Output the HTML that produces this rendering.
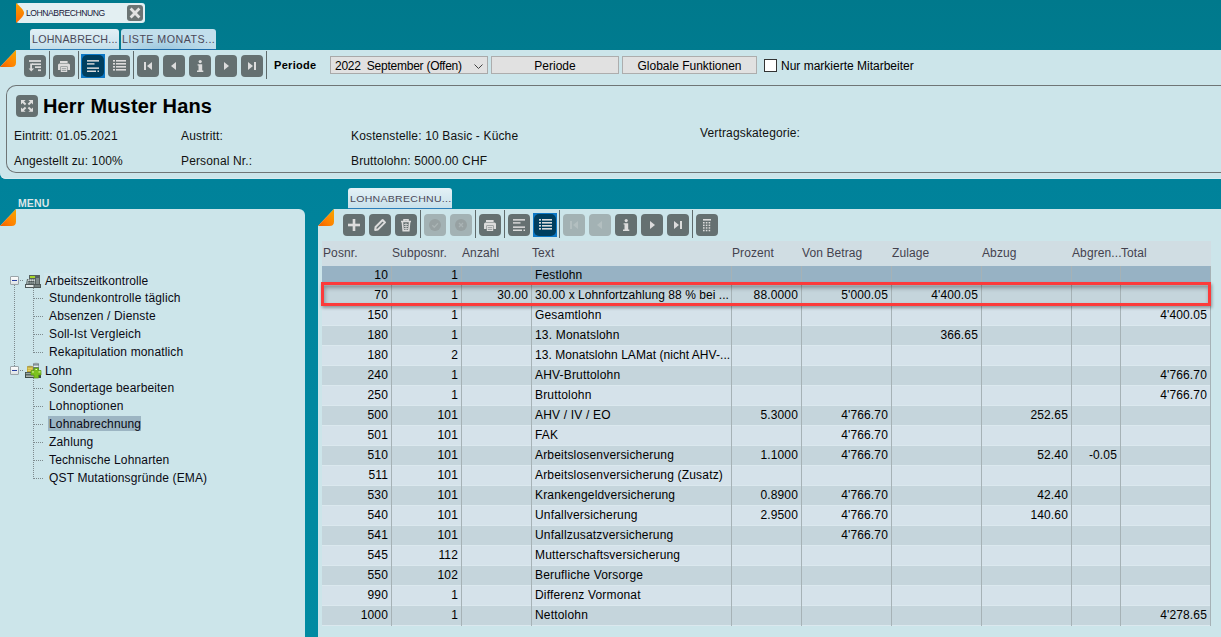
<!DOCTYPE html>
<html><head><meta charset="utf-8">
<style>
*{box-sizing:border-box;margin:0;padding:0}
html,body{width:1221px;height:637px;overflow:hidden}
body{position:relative;background:linear-gradient(#00798c 0px,#007b8f 50px,#00829a 180px,#0087a0 400px,#008ba2 637px);font-family:"Liberation Sans",sans-serif;font-size:12px;color:#111}
.a{position:absolute}
.pl{background:#cce5ea;clip-path:polygon(16px 0,100% 0,100% 100%,0 100%,0 17px)}
.btn{position:absolute;width:22px;height:22px;border-radius:4px;background:#657071}
.btn svg{position:absolute;left:0;top:0}
.btn.dis{background:#a3b2b4}
.btn.act{background:#003f5f;border-radius:5px}
.actb{position:absolute;width:24px;height:24px;background:#0c78c6}
.sep{position:absolute;width:1px;background:#5f6a6b}
.t{position:absolute;white-space:nowrap}
.corner{position:absolute;width:17px;height:17px}
</style></head><body>

<!-- top doc tab -->
<div class="a" style="left:16px;top:3px;width:129px;height:20px;background:#e3eff2;border-radius:3px"></div>
<svg class="a" style="left:16px;top:3px" width="9" height="20"><defs><linearGradient id="og" x1="0" y1="0" x2="0" y2="1"><stop offset="0" stop-color="#f7a000"/><stop offset="1" stop-color="#ff6a00"/></linearGradient></defs><path d="M0 0 C4 3.5 8 7 8 10 C8 13 4 16.5 0 20 Z" fill="url(#og)"/></svg>
<div class="t" style="left:26px;top:8px;font-size:8.6px;letter-spacing:-0.45px;color:#18183a">LOHNABRECHNUNG</div>
<div class="a" style="left:127px;top:5px;width:16px;height:16px;background:#6c7474;border-radius:3px"></div>
<svg class="a" style="left:127px;top:5px" width="16" height="16"><path d="M4.6 4.6 L11.4 11.4 M11.4 4.6 L4.6 11.4" stroke="#e2e2e2" stroke-width="2.8" stroke-linecap="square"/></svg>

<!-- second tabs -->
<div class="a" style="left:30px;top:29px;width:89px;height:21px;background:linear-gradient(#e2f0f5,#cfe5ee 70%,#c3dde8);border-radius:3px 3px 0 0;border-bottom:1px solid #2a7db8"></div>
<div class="t" style="left:32px;top:33px;font-size:10.7px;color:#4b4858;letter-spacing:0.2px">LOHNABRECH...</div>
<div class="a" style="left:121px;top:29px;width:95px;height:21px;background:radial-gradient(ellipse 60% 70% at 45% 100%,#9ec8de,#b9d9e8 70%,#c2dfec);border-radius:3px 3px 0 0;border-bottom:1px solid #1a6aaa"></div>
<div class="t" style="left:122px;top:33px;font-size:10.7px;color:#4b4858;letter-spacing:0.45px">LISTE MONATS...</div>

<!-- top panel -->
<div class="a pl" style="left:0;top:50px;width:1221px;height:129px;border-radius:0 0 0 6px;box-shadow:inset 0 -1px 0 #d8ebf0"></div>
<svg class="corner" style="left:0;top:50px"><defs><linearGradient id="cg1" x1="1" y1="0" x2="0" y2="1"><stop offset="0" stop-color="#f6a800"/><stop offset="0.6" stop-color="#ff8000"/><stop offset="1" stop-color="#f06000"/></linearGradient></defs><path d="M16 0 L16 12.5 Q16 17 11.5 17 L0 17 Z" fill="url(#cg1)"/></svg>

<!-- toolbar 1 -->
<div class="btn " style="left:24px;top:55px"><svg width="22" height="22"><g fill="#dcdcdc"><rect x="5" y="5.1" width="12" height="1.8"/><rect x="8" y="8.4" width="9" height="1.6"/><rect x="11" y="11.3" width="6" height="1.7"/><rect x="14" y="14.4" width="3" height="1.7"/><path d="M6.2 8.4 H9 V10 H8 V13.4 H10.2 L7.2 16.6 L4.6 13.4 H6.2 Z"/></g></svg></div>
<div class="sep" style="left:49px;top:51px;height:28px"></div>
<div class="btn " style="left:53px;top:55px"><svg width="22" height="22"><g fill="#dcdcdc"><rect x="7" y="6" width="7.6" height="2"/><path d="M5 10 Q5 8.4 6.6 8.4 H15.4 Q17 8.4 17 10 V15 H14.6 V11.4 H7.4 V15 H5 Z"/><rect x="7.8" y="12" width="6.4" height="5"/></g><g fill="#8a9394"><rect x="8.8" y="13.3" width="4.4" height="0.8"/><rect x="8.8" y="15.2" width="4.4" height="0.8"/></g></svg></div>
<div class="sep" style="left:78px;top:51px;height:28px"></div>
<div class="actb" style="left:81px;top:54px"></div><div class="btn act" style="left:82px;top:55px"><svg width="22" height="22"><g fill="#dcdcdc"><rect x="5" y="5.1" width="12" height="1.5"/><rect x="5" y="8.2" width="7.5" height="1.4"/><rect x="5" y="12.4" width="12" height="1.5"/><rect x="5" y="15.5" width="9" height="1.5"/><rect x="15.5" y="15.5" width="1.5" height="1.5"/></g></svg></div>
<div class="btn " style="left:108px;top:55px"><svg width="22" height="22"><g fill="#dcdcdc"><rect x="5" y="5" width="2" height="1.6"/><rect x="8" y="5" width="10" height="1.6"/><rect x="5" y="8" width="2" height="1.6"/><rect x="8" y="8" width="10" height="1.6"/><rect x="5" y="11" width="2" height="1.6"/><rect x="8" y="11" width="10" height="1.6"/><rect x="5" y="14" width="2" height="1.6"/><rect x="8" y="14" width="10" height="1.6"/></g></svg></div>
<div class="sep" style="left:133px;top:51px;height:28px"></div>
<div class="btn " style="left:137px;top:55px"><svg width="22" height="22"><g fill="#dcdcdc"><rect x="7" y="7" width="2" height="8"/><path d="M15 7 v8 l-5 -4z"/></g></svg></div>
<div class="btn " style="left:163px;top:55px"><svg width="22" height="22"><g fill="#dcdcdc"><path d="M13 7 v8 l-5 -4z"/></g></svg></div>
<div class="btn " style="left:189px;top:55px"><svg width="22" height="22"><g fill="#dcdcdc"><circle cx="11.2" cy="6.6" r="1.6"/><path d="M8.6 9.2 H13.2 V15.4 H14.3 V17 H8 V15.4 H9.5 V10.6 H8.6 Z"/></g></svg></div>
<div class="btn " style="left:215px;top:55px"><svg width="22" height="22"><g fill="#dcdcdc"><path d="M9 7 v8 l5 -4z"/></g></svg></div>
<div class="btn " style="left:241px;top:55px"><svg width="22" height="22"><g fill="#dcdcdc"><path d="M7 7 v8 l5 -4z"/><rect x="13" y="7" width="2" height="8"/></g></svg></div>
<div class="sep" style="left:266px;top:51px;height:28px"></div>
<div class="t" style="left:274px;top:59px;font-size:11px;font-weight:700;color:#000;letter-spacing:0.3px">Periode</div>
<div class="a" style="left:330px;top:56px;width:158px;height:18px;background:#e1e1e1;border:1px solid #a9a9a9"></div>
<div class="t" style="left:335px;top:59px;font-size:12px;color:#000;letter-spacing:-0.25px">2022&nbsp; September (Offen)</div>
<svg class="a" style="left:473px;top:62px" width="12" height="8"><path d="M1.5 2.5 L5.5 6.5 L9.5 2.5" stroke="#404040" stroke-width="1" fill="none"/></svg>
<div class="a" style="left:491px;top:56px;width:128px;height:18px;background:#e1e1e1;border:1px solid #adadad"></div>
<div class="t" style="left:491px;top:59px;width:128px;text-align:center;font-size:12px;color:#000">Periode</div>
<div class="a" style="left:622px;top:56px;width:135px;height:18px;background:#e1e1e1;border:1px solid #adadad"></div>
<div class="t" style="left:622px;top:59px;width:135px;text-align:center;font-size:12px;color:#000">Globale Funktionen</div>
<div class="a" style="left:764px;top:59px;width:13px;height:13px;background:#fff;border:1px solid #333"></div>
<div class="t" style="left:781px;top:59px;font-size:12px;color:#000">Nur markierte Mitarbeiter</div>

<!-- header card -->
<div class="a" style="left:6px;top:85px;width:1230px;height:88px;border:1px solid #6f7576;border-right:none;border-radius:10px 0 0 10px"></div>
<div class="btn" style="left:16px;top:95px"><svg width="22" height="22"><g fill="#dedede"><path d="M5 5 H9.6 L5 9.4 Z M17 5 H12.4 L17 9.4 Z M5 16.8 H9.6 L5 12.4 Z M17 16.8 H12.4 L17 12.4 Z"/></g><g stroke="#dedede" stroke-width="2"><path d="M6 6 L9.6 9.4 M16 6 L12.4 9.4 M6 15.8 L9.6 12.4 M16 15.8 L12.4 12.4"/></g></svg></div>
<div class="t" style="left:43px;top:95px;font-size:20px;font-weight:700;letter-spacing:0.15px;color:#000">Herr Muster Hans</div>
<div class="t" style="left:14px;top:129px;letter-spacing:0.15px">Eintritt: 01.05.2021</div>
<div class="t" style="left:181px;top:129px;letter-spacing:0.15px">Austritt:</div>
<div class="t" style="left:351px;top:129px;letter-spacing:0.15px">Kostenstelle: 10 Basic - Küche</div>
<div class="t" style="left:700px;top:126px;letter-spacing:0.15px">Vertragskategorie:</div>
<div class="t" style="left:14px;top:154px;letter-spacing:0.15px">Angestellt zu: 100%</div>
<div class="t" style="left:181px;top:154px;letter-spacing:0.15px">Personal Nr.:</div>
<div class="t" style="left:351px;top:154px;letter-spacing:0.15px">Bruttolohn: 5000.00 CHF</div>

<!-- MENU -->
<div class="t" style="left:18px;top:197px;font-size:10.5px;font-weight:700;color:#dce6e8;letter-spacing:0.1px">MENU</div>
<div class="a pl" style="left:0;top:209px;width:305px;height:428px;border-radius:0 6px 0 0"></div>
<svg class="corner" style="left:0;top:209px"><defs><linearGradient id="cg2" x1="1" y1="0" x2="0" y2="1"><stop offset="0" stop-color="#f6a800"/><stop offset="0.6" stop-color="#ff8000"/><stop offset="1" stop-color="#f06000"/></linearGradient></defs><path d="M16 0 L16 12.5 Q16 17 11.5 17 L0 17 Z" fill="url(#cg2)"/></svg>
<div class="a" style="left:14px;top:285px;width:1px;height:81px;background:repeating-linear-gradient(#7d8a8e 0 1px,transparent 1px 2px)"></div>
<div class="a" style="left:10px;top:276px;width:9px;height:9px;border:1px solid #9aa4a8;background:linear-gradient(#fdfdfd,#dde2e4);border-radius:1px"></div><div class="a" style="left:12px;top:280px;width:5px;height:1px;background:#2840a0"></div>
<div class="a" style="left:20px;top:280px;width:4px;height:1px;background:repeating-linear-gradient(90deg,#7d8a8e 0 1px,transparent 1px 2px)"></div>
<svg class="a" style="left:25px;top:274px" width="17" height="15"><rect x="4" y="1" width="11" height="4" fill="#56605f"/><rect x="5" y="2" width="7" height="2" fill="#a6d62a"/><rect x="10" y="1" width="5" height="10" fill="#56605f"/><rect x="11" y="4" width="3" height="6" fill="#7f8b8b"/><path d="M2 5 H10.5 V10.5 H1 Z" fill="#55605f"/><path d="M2.6 5.6 H10 V10 H1.8 Z" fill="#98a4a4"/><g fill="#f4f6f6"><rect x="3" y="5.6" width="1.2" height="1"/><rect x="5" y="5.6" width="1.2" height="1"/><rect x="7" y="5.6" width="1.2" height="1"/><rect x="9" y="5.6" width="1" height="1"/></g><g fill="#2f3838"><rect x="3.5" y="7" width="1.2" height="1"/><rect x="5.5" y="7" width="1.2" height="1"/><rect x="7.5" y="7" width="1.2" height="1"/><rect x="3.5" y="8.6" width="1.2" height="1"/><rect x="5.5" y="8.6" width="1.2" height="1"/><rect x="7.5" y="8.6" width="1.2" height="1"/></g><rect x="0" y="10" width="16" height="4" fill="#4f5959"/><rect x="1" y="11" width="7.5" height="2" fill="#e4eaea"/><rect x="9.5" y="11" width="5.5" height="2" fill="#75807f"/></svg>
<div class="a" style="left:44px;top:273px;width:105px;height:14px;background:rgba(255,255,255,.1)"></div>
<div class="t" style="left:45px;top:274px;font-size:12px;letter-spacing:0.1px;color:#0a0a14">Arbeitszeitkontrolle</div>
<div class="a" style="left:33px;top:288px;width:1px;height:65px;background:repeating-linear-gradient(#7d8a8e 0 1px,transparent 1px 2px)"></div>
<div class="a" style="left:34px;top:298px;width:10px;height:1px;background:repeating-linear-gradient(90deg,#7d8a8e 0 1px,transparent 1px 2px)"></div>
<div class="t" style="left:49px;top:291px;font-size:12px;letter-spacing:0.15px;color:#0a0a14">Stundenkontrolle täglich</div>
<div class="a" style="left:34px;top:316px;width:10px;height:1px;background:repeating-linear-gradient(90deg,#7d8a8e 0 1px,transparent 1px 2px)"></div>
<div class="t" style="left:49px;top:309px;font-size:12px;letter-spacing:0.15px;color:#0a0a14">Absenzen / Dienste</div>
<div class="a" style="left:34px;top:334px;width:10px;height:1px;background:repeating-linear-gradient(90deg,#7d8a8e 0 1px,transparent 1px 2px)"></div>
<div class="t" style="left:49px;top:327px;font-size:12px;letter-spacing:0.15px;color:#0a0a14">Soll-Ist Vergleich</div>
<div class="a" style="left:34px;top:352px;width:10px;height:1px;background:repeating-linear-gradient(90deg,#7d8a8e 0 1px,transparent 1px 2px)"></div>
<div class="t" style="left:49px;top:345px;font-size:12px;letter-spacing:0.15px;color:#0a0a14">Rekapitulation monatlich</div>
<div class="a" style="left:10px;top:366px;width:9px;height:9px;border:1px solid #9aa4a8;background:linear-gradient(#fdfdfd,#dde2e4);border-radius:1px"></div><div class="a" style="left:12px;top:370px;width:5px;height:1px;background:#2840a0"></div>
<div class="a" style="left:20px;top:370px;width:4px;height:1px;background:repeating-linear-gradient(90deg,#7d8a8e 0 1px,transparent 1px 2px)"></div>
<svg class="a" style="left:25px;top:362px" width="17" height="17"><rect x="8" y="1.5" width="6" height="8" fill="#6a7a80"/><ellipse cx="11" cy="1.8" rx="3" ry="1" fill="#9aa4a8"/><rect x="8.5" y="3.5" width="5" height="1.5" fill="#e6eef2"/><rect x="2" y="4.5" width="6" height="6" fill="#b8a030"/><rect x="2.6" y="5.5" width="5" height="1.2" fill="#f2e070"/><rect x="2.6" y="7.6" width="5" height="1.2" fill="#f2e070"/><ellipse cx="5" cy="4.6" rx="3" ry="0.9" fill="#a89a50"/><rect x="0" y="10" width="16" height="6" fill="#3e4c46"/><rect x="0.8" y="10.8" width="8" height="1.5" fill="#9aa8a2"/><rect x="1" y="13.5" width="8" height="1.3" fill="#c4ccc8"/><path d="M9 6 H13.5 V8.5 H16 V13 H13.5 V16 H9 V13 H6 V8.5 H9 Z" fill="#7cc21e" stroke="#5a9a14" stroke-width="0.7"/><rect x="10.5" y="7" width="1.5" height="1" fill="#e8ffb0"/><rect x="7" y="9.5" width="2" height="0.9" fill="#e8ffb0"/><rect x="13.5" y="9.5" width="2" height="0.9" fill="#e8ffb0"/></svg>
<div class="t" style="left:45px;top:364px;font-size:12px;letter-spacing:0.1px;color:#0a0a14">Lohn</div>
<div class="a" style="left:33px;top:378px;width:1px;height:101px;background:repeating-linear-gradient(#7d8a8e 0 1px,transparent 1px 2px)"></div>
<div class="a" style="left:34px;top:388px;width:10px;height:1px;background:repeating-linear-gradient(90deg,#7d8a8e 0 1px,transparent 1px 2px)"></div>
<div class="t" style="left:49px;top:381px;font-size:12px;letter-spacing:0.15px;color:#0a0a14">Sondertage bearbeiten</div>
<div class="a" style="left:34px;top:406px;width:10px;height:1px;background:repeating-linear-gradient(90deg,#7d8a8e 0 1px,transparent 1px 2px)"></div>
<div class="t" style="left:49px;top:399px;font-size:12px;letter-spacing:0.15px;color:#0a0a14">Lohnoptionen</div>
<div class="a" style="left:34px;top:424px;width:10px;height:1px;background:repeating-linear-gradient(90deg,#7d8a8e 0 1px,transparent 1px 2px)"></div>
<div class="a" style="left:48px;top:416px;width:93px;height:15px;background:#9cb5c3"></div>
<div class="t" style="left:49px;top:417px;font-size:12px;letter-spacing:0.15px;color:#0a0a14">Lohnabrechnung</div>
<div class="a" style="left:34px;top:442px;width:10px;height:1px;background:repeating-linear-gradient(90deg,#7d8a8e 0 1px,transparent 1px 2px)"></div>
<div class="t" style="left:49px;top:435px;font-size:12px;letter-spacing:0.15px;color:#0a0a14">Zahlung</div>
<div class="a" style="left:34px;top:460px;width:10px;height:1px;background:repeating-linear-gradient(90deg,#7d8a8e 0 1px,transparent 1px 2px)"></div>
<div class="t" style="left:49px;top:453px;font-size:12px;letter-spacing:0.15px;color:#0a0a14">Technische Lohnarten</div>
<div class="a" style="left:34px;top:478px;width:10px;height:1px;background:repeating-linear-gradient(90deg,#7d8a8e 0 1px,transparent 1px 2px)"></div>
<div class="t" style="left:49px;top:471px;font-size:12px;letter-spacing:0.15px;color:#0a0a14">QST Mutationsgründe (EMA)</div>

<!-- grid panel -->
<div class="a" style="left:348px;top:188px;width:104px;height:21px;background:linear-gradient(#e4f1f6,#d3e7ef 60%,#c8e0ea);border-radius:3px 3px 0 0;border-bottom:1px solid #2a7db8"></div>
<div class="t" style="left:350px;top:193px;font-size:9.6px;color:#4b4858;letter-spacing:0.25px;transform:scaleX(1.1);transform-origin:0 0">LOHNABRECHNU...</div>
<div class="a pl" style="left:318px;top:209px;width:903px;height:428px"></div>
<svg class="corner" style="left:318px;top:209px"><defs><linearGradient id="cg3" x1="1" y1="0" x2="0" y2="1"><stop offset="0" stop-color="#f6a800"/><stop offset="0.6" stop-color="#ff8000"/><stop offset="1" stop-color="#f06000"/></linearGradient></defs><path d="M16 0 L16 12.5 Q16 17 11.5 17 L0 17 Z" fill="url(#cg3)"/></svg>
<div class="btn " style="left:343px;top:214px"><svg width="22" height="22"><g fill="#dcdcdc"><rect x="5" y="9.7" width="12" height="2.6"/><rect x="9.7" y="5" width="2.6" height="12"/></g></svg></div>
<div class="btn " style="left:369px;top:214px"><svg width="22" height="22"><g fill="none" stroke="#dcdcdc" stroke-width="2" stroke-linejoin="round"><path d="M6.2 16 L6.6 13 L13.6 6 L16 8.4 L9 15.4 Z"/></g></svg></div>
<div class="btn " style="left:395px;top:214px"><svg width="22" height="22"><g fill="none" stroke="#dcdcdc" stroke-width="1.6"><path d="M6 7.5 H16 M9 7 V5.8 H13 V7"/><path d="M7.4 8 L8.2 16.6 H13.8 L14.6 8"/><path d="M9 10.5 H13 M9 12.5 H13 M9 14.5 H13 M11 9 V16" stroke-width="0.8"/></g></svg></div>
<div class="sep" style="left:420px;top:210px;height:28px"></div>
<div class="btn dis" style="left:424px;top:214px"><svg width="22" height="22"><circle cx="11" cy="11" r="6" fill="#97a1a2"/><path d="M8.3 11.2 l2 2 l3.6 -3.8" stroke="#aab4b5" stroke-width="1.3" fill="none"/></svg></div>
<div class="btn dis" style="left:450px;top:214px"><svg width="22" height="22"><circle cx="11" cy="11" r="6" fill="#97a1a2"/><path d="M9 9 l4 4 M13 9 l-4 4" stroke="#aab4b5" stroke-width="1.3" fill="none"/></svg></div>
<div class="sep" style="left:475px;top:210px;height:28px"></div>
<div class="btn " style="left:479px;top:214px"><svg width="22" height="22"><g fill="#dcdcdc"><rect x="7" y="6" width="7.6" height="2"/><path d="M5 10 Q5 8.4 6.6 8.4 H15.4 Q17 8.4 17 10 V15 H14.6 V11.4 H7.4 V15 H5 Z"/><rect x="7.8" y="12" width="6.4" height="5"/></g><g fill="#8a9394"><rect x="8.8" y="13.3" width="4.4" height="0.8"/><rect x="8.8" y="15.2" width="4.4" height="0.8"/></g></svg></div>
<div class="sep" style="left:504px;top:210px;height:28px"></div>
<div class="btn " style="left:508px;top:214px"><svg width="22" height="22"><g fill="#dcdcdc"><rect x="5" y="5.1" width="12" height="1.5"/><rect x="5" y="8.2" width="7.5" height="1.4"/><rect x="5" y="12.4" width="12" height="1.5"/><rect x="5" y="15.5" width="9" height="1.5"/><rect x="15.5" y="15.5" width="1.5" height="1.5"/></g></svg></div>
<div class="actb" style="left:533px;top:213px"></div><div class="btn act" style="left:534px;top:214px"><svg width="22" height="22"><g fill="#dcdcdc"><rect x="5" y="5" width="2" height="1.6"/><rect x="8" y="5" width="10" height="1.6"/><rect x="5" y="8" width="2" height="1.6"/><rect x="8" y="8" width="10" height="1.6"/><rect x="5" y="11" width="2" height="1.6"/><rect x="8" y="11" width="10" height="1.6"/><rect x="5" y="14" width="2" height="1.6"/><rect x="8" y="14" width="10" height="1.6"/></g></svg></div>
<div class="sep" style="left:559px;top:210px;height:28px"></div>
<div class="btn dis" style="left:563px;top:214px"><svg width="22" height="22"><g fill="#b3bfc0"><rect x="7" y="7" width="2" height="8"/><path d="M15 7 v8 l-5 -4z"/></g></svg></div>
<div class="btn dis" style="left:589px;top:214px"><svg width="22" height="22"><g fill="#b3bfc0"><path d="M13 7 v8 l-5 -4z"/></g></svg></div>
<div class="btn " style="left:615px;top:214px"><svg width="22" height="22"><g fill="#dcdcdc"><circle cx="11.2" cy="6.6" r="1.6"/><path d="M8.6 9.2 H13.2 V15.4 H14.3 V17 H8 V15.4 H9.5 V10.6 H8.6 Z"/></g></svg></div>
<div class="btn " style="left:641px;top:214px"><svg width="22" height="22"><g fill="#dcdcdc"><path d="M9 7 v8 l5 -4z"/></g></svg></div>
<div class="btn " style="left:667px;top:214px"><svg width="22" height="22"><g fill="#dcdcdc"><path d="M7 7 v8 l5 -4z"/><rect x="13" y="7" width="2" height="8"/></g></svg></div>
<div class="sep" style="left:692px;top:210px;height:28px"></div>
<div class="btn " style="left:696px;top:214px"><svg width="22" height="22"><g fill="#dcdcdc"><rect x="7" y="5" width="8" height="1.6"/><rect x="7.0" y="8.0" width="1.6" height="1.5"/><rect x="7.0" y="10.6" width="1.6" height="1.5"/><rect x="7.0" y="13.2" width="1.6" height="1.5"/><rect x="7.0" y="15.8" width="1.6" height="1.5"/><rect x="9.8" y="8.0" width="1.6" height="1.5"/><rect x="9.8" y="10.6" width="1.6" height="1.5"/><rect x="9.8" y="13.2" width="1.6" height="1.5"/><rect x="9.8" y="15.8" width="1.6" height="1.5"/><rect x="12.6" y="8.0" width="1.6" height="1.5"/><rect x="12.6" y="10.6" width="1.6" height="1.5"/><rect x="12.6" y="13.2" width="1.6" height="1.5"/><rect x="12.6" y="15.8" width="1.6" height="1.5"/></g></svg></div>
<div class="a" style="left:322px;top:241px;width:889px;height:25px;background:#d0dde3"></div>
<div class="t" style="left:323px;top:246px;font-size:12px;letter-spacing:0.1px;color:#44424e">Posnr.</div>
<div class="t" style="left:392px;top:246px;font-size:12px;letter-spacing:0.1px;color:#44424e">Subposnr.</div>
<div class="t" style="left:462px;top:246px;font-size:12px;letter-spacing:0.1px;color:#44424e">Anzahl</div>
<div class="t" style="left:532px;top:246px;font-size:12px;letter-spacing:0.1px;color:#44424e">Text</div>
<div class="t" style="left:732px;top:246px;font-size:12px;letter-spacing:0.1px;color:#44424e">Prozent</div>
<div class="t" style="left:802px;top:246px;font-size:12px;letter-spacing:0.1px;color:#44424e">Von Betrag</div>
<div class="t" style="left:892px;top:246px;font-size:12px;letter-spacing:0.1px;color:#44424e">Zulage</div>
<div class="t" style="left:982px;top:246px;font-size:12px;letter-spacing:0.1px;color:#44424e">Abzug</div>
<div class="t" style="left:1072px;top:246px;font-size:12px;letter-spacing:0.1px;color:#44424e">Abgren...</div>
<div class="t" style="left:1121px;top:246px;font-size:12px;letter-spacing:0.1px;color:#44424e">Total</div>
<div class="a" style="left:322px;top:266px;width:889px;height:19px;background:#97b2c4"></div>
<div class="a" style="left:322px;top:285px;width:889px;height:1px;background:#dbe8ee"></div>
<div class="t" style="left:322px;top:268px;width:66px;text-align:right;font-size:12px;letter-spacing:0.15px;color:#000">10</div>
<div class="t" style="left:391px;top:268px;width:67px;text-align:right;font-size:12px;letter-spacing:0.15px;color:#000">1</div>
<div class="t" style="left:535px;top:268px;font-size:12px;letter-spacing:0.18px;color:#000">Festlohn</div>
<div class="a" style="left:322px;top:286px;width:889px;height:19px;background:#c5d5dc"></div>
<div class="a" style="left:322px;top:305px;width:889px;height:1px;background:#dbe8ee"></div>
<div class="t" style="left:322px;top:288px;width:66px;text-align:right;font-size:12px;letter-spacing:0.15px;color:#000">70</div>
<div class="t" style="left:391px;top:288px;width:67px;text-align:right;font-size:12px;letter-spacing:0.15px;color:#000">1</div>
<div class="t" style="left:461px;top:288px;width:67px;text-align:right;font-size:12px;letter-spacing:0.15px;color:#000">30.00</div>
<div class="t" style="left:535px;top:288px;font-size:12px;letter-spacing:0.05px;color:#000">30.00 x Lohnfortzahlung 88 % bei ...</div>
<div class="t" style="left:731px;top:288px;width:67px;text-align:right;font-size:12px;letter-spacing:0.15px;color:#000">88.0000</div>
<div class="t" style="left:801px;top:288px;width:87px;text-align:right;font-size:12px;letter-spacing:0.15px;color:#000">5'000.05</div>
<div class="t" style="left:891px;top:288px;width:87px;text-align:right;font-size:12px;letter-spacing:0.15px;color:#000">4'400.05</div>
<div class="a" style="left:322px;top:306px;width:889px;height:19px;background:#d5e2ea"></div>
<div class="a" style="left:322px;top:325px;width:889px;height:1px;background:#dbe8ee"></div>
<div class="t" style="left:322px;top:308px;width:66px;text-align:right;font-size:12px;letter-spacing:0.15px;color:#000">150</div>
<div class="t" style="left:391px;top:308px;width:67px;text-align:right;font-size:12px;letter-spacing:0.15px;color:#000">1</div>
<div class="t" style="left:535px;top:308px;font-size:12px;letter-spacing:0.18px;color:#000">Gesamtlohn</div>
<div class="t" style="left:1120px;top:308px;width:87px;text-align:right;font-size:12px;letter-spacing:0.15px;color:#000">4'400.05</div>
<div class="a" style="left:322px;top:326px;width:889px;height:19px;background:#c5d5dc"></div>
<div class="a" style="left:322px;top:345px;width:889px;height:1px;background:#dbe8ee"></div>
<div class="t" style="left:322px;top:328px;width:66px;text-align:right;font-size:12px;letter-spacing:0.15px;color:#000">180</div>
<div class="t" style="left:391px;top:328px;width:67px;text-align:right;font-size:12px;letter-spacing:0.15px;color:#000">1</div>
<div class="t" style="left:535px;top:328px;font-size:12px;letter-spacing:0.18px;color:#000">13. Monatslohn</div>
<div class="t" style="left:891px;top:328px;width:87px;text-align:right;font-size:12px;letter-spacing:0.15px;color:#000">366.65</div>
<div class="a" style="left:322px;top:346px;width:889px;height:19px;background:#d5e2ea"></div>
<div class="a" style="left:322px;top:365px;width:889px;height:1px;background:#dbe8ee"></div>
<div class="t" style="left:322px;top:348px;width:66px;text-align:right;font-size:12px;letter-spacing:0.15px;color:#000">180</div>
<div class="t" style="left:391px;top:348px;width:67px;text-align:right;font-size:12px;letter-spacing:0.15px;color:#000">2</div>
<div class="t" style="left:535px;top:348px;font-size:12px;letter-spacing:0.05px;color:#000">13. Monatslohn LAMat (nicht AHV-...</div>
<div class="a" style="left:322px;top:366px;width:889px;height:19px;background:#c5d5dc"></div>
<div class="a" style="left:322px;top:385px;width:889px;height:1px;background:#dbe8ee"></div>
<div class="t" style="left:322px;top:368px;width:66px;text-align:right;font-size:12px;letter-spacing:0.15px;color:#000">240</div>
<div class="t" style="left:391px;top:368px;width:67px;text-align:right;font-size:12px;letter-spacing:0.15px;color:#000">1</div>
<div class="t" style="left:535px;top:368px;font-size:12px;letter-spacing:0.18px;color:#000">AHV-Bruttolohn</div>
<div class="t" style="left:1120px;top:368px;width:87px;text-align:right;font-size:12px;letter-spacing:0.15px;color:#000">4'766.70</div>
<div class="a" style="left:322px;top:386px;width:889px;height:19px;background:#d5e2ea"></div>
<div class="a" style="left:322px;top:405px;width:889px;height:1px;background:#dbe8ee"></div>
<div class="t" style="left:322px;top:388px;width:66px;text-align:right;font-size:12px;letter-spacing:0.15px;color:#000">250</div>
<div class="t" style="left:391px;top:388px;width:67px;text-align:right;font-size:12px;letter-spacing:0.15px;color:#000">1</div>
<div class="t" style="left:535px;top:388px;font-size:12px;letter-spacing:0.18px;color:#000">Bruttolohn</div>
<div class="t" style="left:1120px;top:388px;width:87px;text-align:right;font-size:12px;letter-spacing:0.15px;color:#000">4'766.70</div>
<div class="a" style="left:322px;top:406px;width:889px;height:19px;background:#c5d5dc"></div>
<div class="a" style="left:322px;top:425px;width:889px;height:1px;background:#dbe8ee"></div>
<div class="t" style="left:322px;top:408px;width:66px;text-align:right;font-size:12px;letter-spacing:0.15px;color:#000">500</div>
<div class="t" style="left:391px;top:408px;width:67px;text-align:right;font-size:12px;letter-spacing:0.15px;color:#000">101</div>
<div class="t" style="left:535px;top:408px;font-size:12px;letter-spacing:0.18px;color:#000">AHV / IV / EO</div>
<div class="t" style="left:731px;top:408px;width:67px;text-align:right;font-size:12px;letter-spacing:0.15px;color:#000">5.3000</div>
<div class="t" style="left:801px;top:408px;width:87px;text-align:right;font-size:12px;letter-spacing:0.15px;color:#000">4'766.70</div>
<div class="t" style="left:981px;top:408px;width:87px;text-align:right;font-size:12px;letter-spacing:0.15px;color:#000">252.65</div>
<div class="a" style="left:322px;top:426px;width:889px;height:19px;background:#d5e2ea"></div>
<div class="a" style="left:322px;top:445px;width:889px;height:1px;background:#dbe8ee"></div>
<div class="t" style="left:322px;top:428px;width:66px;text-align:right;font-size:12px;letter-spacing:0.15px;color:#000">501</div>
<div class="t" style="left:391px;top:428px;width:67px;text-align:right;font-size:12px;letter-spacing:0.15px;color:#000">101</div>
<div class="t" style="left:535px;top:428px;font-size:12px;letter-spacing:0.18px;color:#000">FAK</div>
<div class="t" style="left:801px;top:428px;width:87px;text-align:right;font-size:12px;letter-spacing:0.15px;color:#000">4'766.70</div>
<div class="a" style="left:322px;top:446px;width:889px;height:19px;background:#c5d5dc"></div>
<div class="a" style="left:322px;top:465px;width:889px;height:1px;background:#dbe8ee"></div>
<div class="t" style="left:322px;top:448px;width:66px;text-align:right;font-size:12px;letter-spacing:0.15px;color:#000">510</div>
<div class="t" style="left:391px;top:448px;width:67px;text-align:right;font-size:12px;letter-spacing:0.15px;color:#000">101</div>
<div class="t" style="left:535px;top:448px;font-size:12px;letter-spacing:0.18px;color:#000">Arbeitslosenversicherung</div>
<div class="t" style="left:731px;top:448px;width:67px;text-align:right;font-size:12px;letter-spacing:0.15px;color:#000">1.1000</div>
<div class="t" style="left:801px;top:448px;width:87px;text-align:right;font-size:12px;letter-spacing:0.15px;color:#000">4'766.70</div>
<div class="t" style="left:981px;top:448px;width:87px;text-align:right;font-size:12px;letter-spacing:0.15px;color:#000">52.40</div>
<div class="t" style="left:1071px;top:448px;width:46px;text-align:right;font-size:12px;letter-spacing:0.15px;color:#000">-0.05</div>
<div class="a" style="left:322px;top:466px;width:889px;height:19px;background:#d5e2ea"></div>
<div class="a" style="left:322px;top:485px;width:889px;height:1px;background:#dbe8ee"></div>
<div class="t" style="left:322px;top:468px;width:66px;text-align:right;font-size:12px;letter-spacing:0.15px;color:#000">511</div>
<div class="t" style="left:391px;top:468px;width:67px;text-align:right;font-size:12px;letter-spacing:0.15px;color:#000">101</div>
<div class="t" style="left:535px;top:468px;font-size:12px;letter-spacing:0.18px;color:#000">Arbeitslosenversicherung (Zusatz)</div>
<div class="a" style="left:322px;top:486px;width:889px;height:19px;background:#c5d5dc"></div>
<div class="a" style="left:322px;top:505px;width:889px;height:1px;background:#dbe8ee"></div>
<div class="t" style="left:322px;top:488px;width:66px;text-align:right;font-size:12px;letter-spacing:0.15px;color:#000">530</div>
<div class="t" style="left:391px;top:488px;width:67px;text-align:right;font-size:12px;letter-spacing:0.15px;color:#000">101</div>
<div class="t" style="left:535px;top:488px;font-size:12px;letter-spacing:0.18px;color:#000">Krankengeldversicherung</div>
<div class="t" style="left:731px;top:488px;width:67px;text-align:right;font-size:12px;letter-spacing:0.15px;color:#000">0.8900</div>
<div class="t" style="left:801px;top:488px;width:87px;text-align:right;font-size:12px;letter-spacing:0.15px;color:#000">4'766.70</div>
<div class="t" style="left:981px;top:488px;width:87px;text-align:right;font-size:12px;letter-spacing:0.15px;color:#000">42.40</div>
<div class="a" style="left:322px;top:506px;width:889px;height:19px;background:#d5e2ea"></div>
<div class="a" style="left:322px;top:525px;width:889px;height:1px;background:#dbe8ee"></div>
<div class="t" style="left:322px;top:508px;width:66px;text-align:right;font-size:12px;letter-spacing:0.15px;color:#000">540</div>
<div class="t" style="left:391px;top:508px;width:67px;text-align:right;font-size:12px;letter-spacing:0.15px;color:#000">101</div>
<div class="t" style="left:535px;top:508px;font-size:12px;letter-spacing:0.18px;color:#000">Unfallversicherung</div>
<div class="t" style="left:731px;top:508px;width:67px;text-align:right;font-size:12px;letter-spacing:0.15px;color:#000">2.9500</div>
<div class="t" style="left:801px;top:508px;width:87px;text-align:right;font-size:12px;letter-spacing:0.15px;color:#000">4'766.70</div>
<div class="t" style="left:981px;top:508px;width:87px;text-align:right;font-size:12px;letter-spacing:0.15px;color:#000">140.60</div>
<div class="a" style="left:322px;top:526px;width:889px;height:19px;background:#c5d5dc"></div>
<div class="a" style="left:322px;top:545px;width:889px;height:1px;background:#dbe8ee"></div>
<div class="t" style="left:322px;top:528px;width:66px;text-align:right;font-size:12px;letter-spacing:0.15px;color:#000">541</div>
<div class="t" style="left:391px;top:528px;width:67px;text-align:right;font-size:12px;letter-spacing:0.15px;color:#000">101</div>
<div class="t" style="left:535px;top:528px;font-size:12px;letter-spacing:0.18px;color:#000">Unfallzusatzversicherung</div>
<div class="t" style="left:801px;top:528px;width:87px;text-align:right;font-size:12px;letter-spacing:0.15px;color:#000">4'766.70</div>
<div class="a" style="left:322px;top:546px;width:889px;height:19px;background:#d5e2ea"></div>
<div class="a" style="left:322px;top:565px;width:889px;height:1px;background:#dbe8ee"></div>
<div class="t" style="left:322px;top:548px;width:66px;text-align:right;font-size:12px;letter-spacing:0.15px;color:#000">545</div>
<div class="t" style="left:391px;top:548px;width:67px;text-align:right;font-size:12px;letter-spacing:0.15px;color:#000">112</div>
<div class="t" style="left:535px;top:548px;font-size:12px;letter-spacing:0.18px;color:#000">Mutterschaftsversicherung</div>
<div class="a" style="left:322px;top:566px;width:889px;height:19px;background:#c5d5dc"></div>
<div class="a" style="left:322px;top:585px;width:889px;height:1px;background:#dbe8ee"></div>
<div class="t" style="left:322px;top:568px;width:66px;text-align:right;font-size:12px;letter-spacing:0.15px;color:#000">550</div>
<div class="t" style="left:391px;top:568px;width:67px;text-align:right;font-size:12px;letter-spacing:0.15px;color:#000">102</div>
<div class="t" style="left:535px;top:568px;font-size:12px;letter-spacing:0.18px;color:#000">Berufliche Vorsorge</div>
<div class="a" style="left:322px;top:586px;width:889px;height:19px;background:#d5e2ea"></div>
<div class="a" style="left:322px;top:605px;width:889px;height:1px;background:#dbe8ee"></div>
<div class="t" style="left:322px;top:588px;width:66px;text-align:right;font-size:12px;letter-spacing:0.15px;color:#000">990</div>
<div class="t" style="left:391px;top:588px;width:67px;text-align:right;font-size:12px;letter-spacing:0.15px;color:#000">1</div>
<div class="t" style="left:535px;top:588px;font-size:12px;letter-spacing:0.18px;color:#000">Differenz Vormonat</div>
<div class="a" style="left:322px;top:606px;width:889px;height:19px;background:#c5d5dc"></div>
<div class="a" style="left:322px;top:625px;width:889px;height:1px;background:#dbe8ee"></div>
<div class="t" style="left:322px;top:608px;width:66px;text-align:right;font-size:12px;letter-spacing:0.15px;color:#000">1000</div>
<div class="t" style="left:391px;top:608px;width:67px;text-align:right;font-size:12px;letter-spacing:0.15px;color:#000">1</div>
<div class="t" style="left:535px;top:608px;font-size:12px;letter-spacing:0.18px;color:#000">Nettolohn</div>
<div class="t" style="left:1120px;top:608px;width:87px;text-align:right;font-size:12px;letter-spacing:0.15px;color:#000">4'278.65</div>
<div class="a" style="left:391px;top:266px;width:1px;height:360px;background:#a6b2b6"></div>
<div class="a" style="left:461px;top:266px;width:1px;height:360px;background:#a6b2b6"></div>
<div class="a" style="left:531px;top:266px;width:1px;height:360px;background:#a6b2b6"></div>
<div class="a" style="left:731px;top:266px;width:1px;height:360px;background:#a6b2b6"></div>
<div class="a" style="left:801px;top:266px;width:1px;height:360px;background:#a6b2b6"></div>
<div class="a" style="left:891px;top:266px;width:1px;height:360px;background:#a6b2b6"></div>
<div class="a" style="left:981px;top:266px;width:1px;height:360px;background:#a6b2b6"></div>
<div class="a" style="left:1071px;top:266px;width:1px;height:360px;background:#a6b2b6"></div>
<div class="a" style="left:1120px;top:266px;width:1px;height:360px;background:#a6b2b6"></div>
<div class="a" style="left:1210px;top:266px;width:1px;height:360px;background:#a6b2b6"></div>
<div class="a" style="left:321px;top:282px;width:890px;height:24px;border:3px solid #fc3a3a;box-shadow:1px 2px 3px rgba(0,0,0,.33), inset 1px 3px 4px rgba(0,0,0,.32)"></div>

</body></html>
